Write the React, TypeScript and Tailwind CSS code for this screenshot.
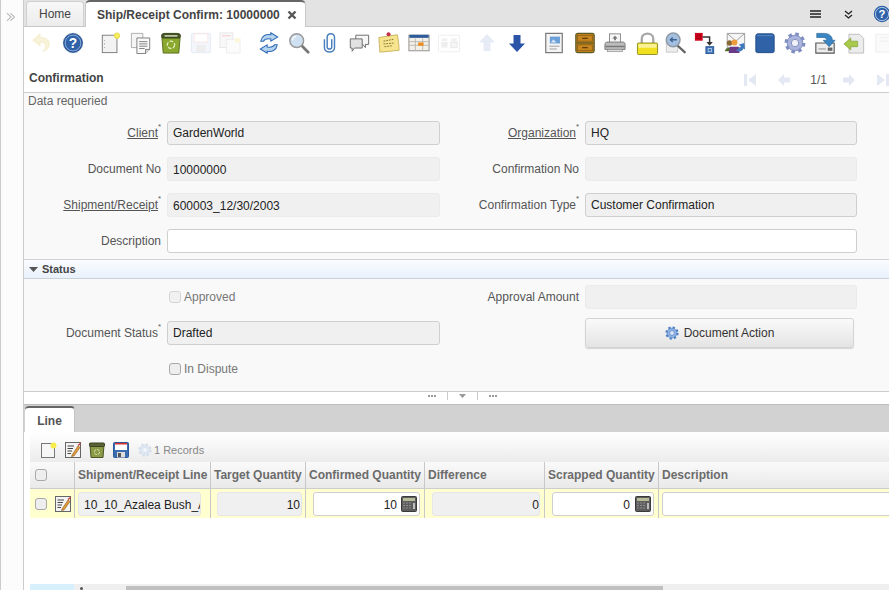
import React from "react";

const S = ({ children, size = 22, box = 24 }: { children: React.ReactNode; size?: number; box?: number }) => (
  <svg width={size} height={size} viewBox={`0 0 ${box} ${box}`} className="block shrink-0">{children}</svg>
);

const Gear = ({ fill, ring, hole }: { fill: string; ring: string; hole: string }) => (
  <>
    <circle cx="12" cy="12" r="8.6" fill={fill} stroke={ring} strokeWidth="1" />
    <circle cx="12" cy="12" r="9.6" fill="none" stroke={ring} strokeWidth="3.6" strokeDasharray="3.8 3.74" />
    <circle cx="12" cy="12" r="4" fill={hole} stroke={ring} strokeWidth="1" />
  </>
);

const Undo = () => <S><path d="M11 2 L3 9 L11 15 V11 C15 11 17 13 17 16 C17 18 16 20 14 21 C19 20 21 17 21 13 C21 8 16 6 11 6 Z" fill="#f8f2d8" stroke="#f3ecca" /></S>;
const Help = () => <S><circle cx="12" cy="12" r="11.4" fill="#dfe6f0" /><circle cx="12" cy="12" r="10.2" fill="#2f62a8" stroke="#1c4687" /><circle cx="12" cy="12" r="8.6" fill="none" stroke="#a9c3e6" strokeWidth="0.8" /><text x="12" y="17.5" textAnchor="middle" fontSize="15" fontWeight="700" fill="#fff" fontFamily="Liberation Sans">?</text></S>;
const NewDoc = () => <S><rect x="2.5" y="3.5" width="16" height="19" fill="#f3f3f3" stroke="#777" /><circle cx="5" cy="9" r=".6" fill="#999" /><circle cx="5" cy="13" r=".6" fill="#999" /><circle cx="5" cy="17" r=".6" fill="#999" /><circle cx="18.5" cy="4" r="3" fill="#f6ec5c" stroke="#e6d74a" /></S>;
const Copy = () => <S><path d="M1.5 1.5 H14 V17 H1.5 Z" fill="#f5f5f5" stroke="#aaa" /><path d="M7.5 6.5 H21.5 V19 L17 23.5 H7.5 Z" fill="#fafafa" stroke="#777" /><path d="M10 10.5 H19 M10 13 H19 M10 15.5 H19 M10 18 H16" stroke="#777" /><path d="M17 23.5 V19 H21.5" fill="#ddd" stroke="#777" /></S>;
const Bin = () => <S><path d="M2 5 C2 1.5 4 1.5 6 1.5 H18 C20 1.5 22 1.5 22 5 L20.5 23 H3.5 Z" fill="#8aa72e" stroke="#56691a" /><rect x="2" y="2" width="20" height="4.5" rx="1.5" fill="#4b5a2c" stroke="#2f3a18" /><rect x="5" y="3.5" width="14" height="1.5" fill="#dfe5c7" /><circle cx="12" cy="14" r="4" fill="none" stroke="#e4edbd" strokeWidth="1.4" strokeDasharray="4 1.6" /></S>;
const SaveOff = () => <S><rect x="1.5" y="1.5" width="21" height="21" rx="1.5" fill="#f3f6fb" stroke="#e2e9f4" /><rect x="4.5" y="2" width="15" height="9" fill="#fff" stroke="#f9e3e3" /><rect x="7" y="14" width="10" height="8" fill="#eeeeee" /></S>;
const SaveCopyOff = () => <S><rect x="1" y="1" width="14" height="16" fill="#f8f8f8" stroke="#e6e6e6" /><path d="M3 4 H13" stroke="#f9d8d8" strokeWidth="1.5" /><rect x="8" y="8" width="15" height="15" fill="#fbfbfb" stroke="#ececec" /><circle cx="20" cy="9" r="2.6" fill="#fcf8d6" /></S>;
const Refresh = () => <S><path d="M3 10 C4 4 9 2 14 3 V0.8 L21.5 5.5 L14 10 V7.6 C10 7 7 8 6 10 Z" fill="#b6d3ef" stroke="#2e6ab3" strokeWidth="1.1" /><path d="M21 14 C20 20 15 22 10 21 V23.2 L2.5 18.5 L10 14 V16.4 C14 17 17 16 18 14 Z" fill="#b6d3ef" stroke="#2e6ab3" strokeWidth="1.1" /></S>;
const Find = () => <S><path d="M14.5 14.5 L22 22" stroke="#777" strokeWidth="3" strokeLinecap="round" /><circle cx="9.5" cy="9.5" r="7.5" fill="#cfe0f2" stroke="#9a9a9a" strokeWidth="1.6" /><path d="M5 9 C5 6.5 7 5 9 5" stroke="#fff" fill="none" strokeWidth="1.4" /></S>;
const Clip = () => <S><path d="M7 8 V17 C7 23.5 18 23.5 18 17 V6 C18 0.5 10 0.5 10 6 V16 C10 19.5 15 19.5 15 16 V8" fill="none" stroke="#4a7fbd" strokeWidth="1.6" /></S>;
const Chat = () => <S><path d="M8.5 3.5 H22.5 V13.5 H19 V17 L16 13.5 H8.5 Z" fill="#f7f7f7" stroke="#666" /><path d="M2.5 7.5 H15.5 V17.5 H7 L4.5 21 V17.5 H2.5 Z" fill="#e2e2e2" stroke="#666" /></S>;
const Note = () => <S><path d="M1 6 L21 3 C22 8 23 14 23 20 L2 22 C2 16 1 11 1 6 Z" fill="#f6e58e" stroke="#c7b15a" /><path d="M6 10 L17 8 M6 13 L18 12 M7 16 L16 15" stroke="#8d7d38" strokeWidth="1.1" strokeDasharray="2 1" /><circle cx="11.5" cy="2.5" r="2.2" fill="#c3304c" /></S>;
const Calendar = () => <S><rect x="1" y="3.5" width="22" height="17" fill="#f2f0e8" stroke="#8a8a8a" /><rect x="1.5" y="3" width="21" height="3.4" fill="#2e5c9a" /><path d="M1 10.5 H23 M1 14.5 H23 M8 7 V20 M16 7 V20" stroke="#b8b8b0" /><rect x="11" y="11.5" width="6" height="3.5" fill="#ef8d1c" /></S>;
const GridOff = () => <S><rect x=".5" y="3.5" width="23" height="18" rx="1" fill="#fff" stroke="#ececec" /><rect x="4" y="7" width="6" height="3" fill="#f0f0f0" /><rect x="3.5" y="11" width="7" height="6" fill="#eee" /><rect x="14.5" y="7" width="6" height="3" fill="#f0f0f0" /><rect x="14" y="11" width="7" height="6" fill="#f5f5f5" stroke="#e8e8e8" /></S>;
const Up = () => <S size={24}><path d="M12 3 L20 11.5 H15.5 V20 H8.5 V11.5 H4 Z" fill="#e6ebf6" /></S>;
const Down = () => <S size={24}><path d="M12 21 L20 12.5 H15.5 V4 H8.5 V12.5 H4 Z" fill="#2b54a8" /></S>;
const Report = () => <S><rect x="3" y="1.5" width="18" height="21" fill="#f4f4f4" stroke="#777" strokeWidth="1.3" /><rect x="7.5" y="5" width="11" height="7.5" fill="#6a9fd8" /><path d="M8.5 11.5 L11.5 8 L14.5 11.5" fill="#d6e5f5" /><path d="M7 15.5 H18 M7 18.5 H15" stroke="#9a9a9a" /></S>;
const Archive = () => <S><rect x="2" y="1.5" width="20" height="21" rx="2" fill="#c6851e" stroke="#5e5a28" strokeWidth="1.4" /><path d="M2.5 12 H21.5" stroke="#5e5a28" strokeWidth="1.4" /><path d="M9 7 H15 M9 17 H15" stroke="#5e3d0d" strokeWidth="1.4" /><rect x="4" y="3.5" width="16" height="6.5" fill="none" stroke="#7a5714" strokeWidth=".7" /><rect x="4" y="14" width="16" height="6.5" fill="none" stroke="#7a5714" strokeWidth=".7" /></S>;
const Print = () => <S><rect x="6" y="2" width="12" height="10" fill="#f6f6f6" stroke="#888" /><path d="M12 4 L15 7 H13 V9 H11 V7 H9 Z" fill="#777" /><path d="M3 11 H21 C22 11 23 12 23 14 V19 H1 V14 C1 12 2 11 3 11 Z" fill="#bcbcbc" stroke="#777" /><rect x="1.5" y="15" width="21" height="1.6" fill="#777" /><rect x="4" y="19" width="16" height="2.5" fill="#ddd" stroke="#888" strokeWidth=".7" /></S>;
const Lock = () => <S size={23}><path d="M6 12 V7 C6 0 18 0 18 7 V12" fill="none" stroke="#a8a8a8" strokeWidth="2.4" /><rect x="1.5" y="11.5" width="21" height="12" rx="1" fill="#f0e020" stroke="#8f8d20" /><rect x="2.5" y="12.5" width="19" height="4" fill="#f9f192" /></S>;
const ZoomAcross = () => <S><path d="M2.5 8 H15 V22 H2.5 Z" fill="#ededed" stroke="#c6c6c6" /><path d="M15 15 L22.5 22" stroke="#666" strokeWidth="2.6" strokeLinecap="round" /><circle cx="10" cy="8.5" r="7.5" fill="#a4bfdf" stroke="#8f9aa8" strokeWidth="1.6" /><path d="M14 8.5 H7 M9.5 6 L7 8.5 L9.5 11" fill="none" stroke="#3a628f" strokeWidth="1.5" /></S>;
const Workflow = () => <S><rect x="1" y="1" width="8.5" height="8.5" fill="#d0021b" /><rect x="3.5" y="3.5" width="3.5" height="3.5" fill="none" stroke="#9c0014" /><path d="M9.5 5.5 H17 V12" fill="none" stroke="#333" strokeWidth="1.6" /><path d="M13.5 11 H20.5 L17 15 Z" fill="#333" /><rect x="13" y="16" width="8.5" height="7.5" fill="#3f73b5" stroke="#2c5a96" /><rect x="15.5" y="18" width="3.5" height="3.5" fill="none" stroke="#a9c8ea" /></S>;
const Mail = () => <S><path d="M3.5 1.5 H22.5 V17 H3.5 Z" fill="#f5f5f5" stroke="#999" /><path d="M3.5 1.5 L13 10 L22.5 1.5" fill="none" stroke="#999" /><circle cx="6" cy="12" r="3" fill="#8a6a34" /><path d="M1 21 C1 16 11 16 11 21 Z" fill="#516b2a" /><circle cx="11.5" cy="11.5" r="3.2" fill="#ef9c3d" /><path d="M5 23 L6.5 16 H16 L17 23 Z" fill="#6b3a86" /><path d="M13 20 C15 22 20 22 21 18 L23 19 L22 12 L16 14 L18.5 15.5 C17.5 18 15 18 13 20 Z" fill="#3f78bd" /></S>;
const Block = () => <S><path d="M4 2 H20 C21 2 22 3 22 4 V21 C22 22 21 22.5 20 22.5 H4 C3 22.5 2 22 2 21 V4 C2 3 3 2 4 2 Z" fill="#2f62a6" stroke="#1f4a85" /><path d="M3.5 4 H20.5" stroke="#5f8dc8" /></S>;
const Settings = () => <S><Gear fill="#a9b3dc" ring="#7f8ec0" hole="#f2f2f6" /></S>;
const Imp = () => <S><path d="M2 12 H22 V23 H2 Z" fill="#ededed" stroke="#555" strokeWidth="1.2" /><rect x="15" y="17" width="5" height="3.5" fill="#666" /><path d="M5 18.5 H13" stroke="#888" /><path d="M3 1.5 H11 C18 1.5 20 6 20 9 H23 L16.5 16 L10 9 H14 C14 7 12.5 6 10 6 H3 Z" fill="#3a85c4" stroke="#21608f" strokeWidth=".7" /></S>;
const Exp = () => <S><path d="M6.5 2.5 H18 L22.5 7 V23 H6.5 Z" fill="#ececec" stroke="#bbb" /><path d="M1 13 L8.5 6.5 V10 H16 V16 H8.5 V19.5 Z" fill="#a8c94a" stroke="#7f9d30" strokeWidth=".7" /></S>;
const LastOff = () => <S><path d="M4 2.5 H22 V22 H4 Z" fill="#fafafa" stroke="#eee" /><path d="M8 6 H18 M8 10 H18" stroke="#f0f0f0" /></S>;

const Calc = () => (
  <S size={16} box={16}>
    <rect x=".5" y=".5" width="15" height="15" rx="1" fill="#5d5d5d" stroke="#3a3a3a" />
    <rect x="2" y="2" width="12" height="3" fill="#b8bb98" />
    <path d="M2 7 H11 M2 9.5 H11 M2 12 H11" stroke="#8e8e8e" strokeWidth="1.2" strokeDasharray="2 1" />
    <rect x="12" y="7" width="2" height="6" fill="#bdbdbd" />
  </S>
);

const EditIcon = () => (
  <S size={16} box={16}>
    <rect x=".5" y=".5" width="15" height="15" fill="#f4f4f4" stroke="#666" />
    <path d="M2.5 4 H9 M2.5 6.5 H8 M2.5 9 H7 M2.5 11.5 H6" stroke="#444" />
    <path d="M7 13 L13 4 L15 5.5 L9 14 L6.5 14.5 Z" fill="#e09a3a" stroke="#8a5a20" strokeWidth=".6" />
    <path d="M13 3.5 L15.5 1.5" stroke="#c33" strokeWidth="1.4" />
  </S>
);

const bar: { c: React.ReactNode; m: string }[] = [
  { c: <Undo />, m: "ml-[5px]" }, { c: <Help />, m: "ml-[8px]" }, { c: <NewDoc />, m: "ml-[14px]" },
  { c: <Copy />, m: "ml-[6px]" }, { c: <Bin />, m: "ml-[6px]" }, { c: <SaveOff />, m: "ml-[6px]" },
  { c: <SaveCopyOff />, m: "ml-[5px]" }, { c: <Refresh />, m: "ml-[15px]" }, { c: <Find />, m: "ml-[6px]" },
  { c: <Clip />, m: "ml-[6px]" }, { c: <Chat />, m: "ml-[6px]" }, { c: <Note />, m: "ml-[6px]" },
  { c: <Calendar />, m: "ml-[6px]" }, { c: <GridOff />, m: "ml-[6px]" }, { c: <Up />, m: "ml-[14px]" },
  { c: <Down />, m: "ml-[6px]" }, { c: <Report />, m: "ml-[13px]" }, { c: <Archive />, m: "ml-[7px]" },
  { c: <Print />, m: "ml-[6px]" }, { c: <Lock />, m: "ml-[8px]" }, { c: <ZoomAcross />, m: "ml-[4px]" },
  { c: <Workflow />, m: "ml-[6px]" }, { c: <Mail />, m: "ml-[6px]" }, { c: <Block />, m: "ml-[6px]" },
  { c: <Settings />, m: "ml-[6px]" }, { c: <Imp />, m: "ml-[6px]" }, { c: <Exp />, m: "ml-[5px]" },
  { c: <LastOff />, m: "ml-[5px]" },
];

const Star = () => <span className="relative -top-[8px] inline-block w-[3px] text-left text-[8px] leading-none text-[#555]">*</span>;

const Label = ({ text, link, star, className = "" }: { text: string; link?: boolean; star?: boolean; className?: string }) => (
  <div className={`text-right text-[12px] text-[#555] ${className}`}>
    <span className={link ? "underline" : ""}>{text}</span>
    {star && <Star />}
  </div>
);

const Field = ({ value = "", ro = true, border = false, className = "" }: { value?: string; ro?: boolean; border?: boolean; className?: string }) => (
  <div
    className={`flex h-6 items-center rounded-[3px] border px-[5px] text-[12px] text-[#222] ${
      ro ? "bg-[#f0f0f0]" : "bg-white"
    } ${border ? "border-[#cfcfcf]" : ro ? "border-[#ebebeb] pt-[2px]" : "border-[#cfcfcf]"} ${className}`}
  >
    {value}
  </div>
);

const Check = ({ label, faded }: { label: string; faded?: boolean }) => (
  <div className="flex items-center text-[12px] text-[#777]">
    <span className={`ml-[2px] mr-[3px] h-3 w-3 rounded-[3px] border ${faded ? "border-[#d5d5d5] bg-[#f1f1f1]" : "border-[#a8a8a8] bg-[#eeeeee]"}`} />
    {label}
  </div>
);

const Head = ({ t, className = "" }: { t: string; className?: string }) => (
  <div className={`flex items-center overflow-hidden whitespace-nowrap border-l border-[#c8c8c8] pl-[3px] text-[12px] font-bold text-[#6b6b6b] ${className}`}>{t}</div>
);

export default function App() {
  return (
    <div className="flex h-[590px] w-[889px] overflow-hidden bg-white font-['Liberation_Sans',Arial,sans-serif]">
      <div className="flex h-full w-6 shrink-0 justify-center border-x border-x-[#cccccc] bg-[#fcfcfc] pt-[12px]">
        <svg width="9" height="10" viewBox="0 0 9 12" preserveAspectRatio="none" className="mr-[3px]"><path d="M1 1.5 L5 6 L1 10.5 M4.5 1.5 L8.5 6 L4.5 10.5" fill="none" stroke="#b5b5b5" strokeWidth="1.3" /></svg>
      </div>

      <div className="flex h-full min-w-0 flex-1 flex-col">
        {/* Window tabs */}
        <div className="flex h-[27px] shrink-0 items-end border-b border-[#c9c9c9] bg-[#e3e3e3]">
          <div className="ml-[2px] flex h-[25px] w-[58px] items-center justify-center rounded-t-[4px] border border-b-0 border-[#d0d0d0] bg-gradient-to-b from-[#f8f8f8] to-[#ececec] text-[12px] text-[#444]">Home</div>
          <div className="relative top-[1px] ml-[1px] flex h-[27px] w-[221px] items-center rounded-t-[5px] border-x border-x-[#c9c9c9] border-t-2 border-t-[#666] bg-white pl-[11px] text-[12px] font-bold text-[#444]">
            <span className="whitespace-nowrap">Ship/Receipt Confirm: 10000000</span>
            <svg width="10" height="10" viewBox="0 0 10 10" className="ml-[7px]"><path d="M1.5 1.5 L8.5 8.5 M8.5 1.5 L1.5 8.5" stroke="#555" strokeWidth="2.4" /></svg>
          </div>
          <div className="flex h-[26px] flex-1 items-center justify-end pt-[2px]">
            <svg width="11" height="8" viewBox="0 0 11 9" preserveAspectRatio="none" className="mr-[23px]"><path d="M0 1 H11 M0 4.5 H11 M0 8 H11" stroke="#222" strokeWidth="1.7" /></svg>
            <svg width="9" height="9" viewBox="0 0 9 9" className="mr-[20px]"><path d="M1 1 L4.5 4 L8 1 M1 5 L4.5 8 L8 5" fill="none" stroke="#222" strokeWidth="1.3" /></svg>
            <svg width="18" height="18" viewBox="0 0 24 24" className="mr-[-2px] shrink-0"><circle cx="12" cy="12" r="11" fill="#2f62a8" /><circle cx="12" cy="12" r="8.8" fill="none" stroke="#d8e4f4" strokeWidth="1" /><text x="12" y="17.5" textAnchor="middle" fontSize="15" fontWeight="700" fill="#fff" fontFamily="Liberation Sans">?</text></svg>
          </div>
        </div>

        {/* Main toolbar */}
        <div className="flex h-[38px] shrink-0 items-center overflow-hidden bg-white pb-[8px] pt-[2px]">
          {bar.map((b, i) => (
            <div key={i} className={`flex w-6 shrink-0 justify-center ${b.m}`}>{b.c}</div>
          ))}
        </div>

        {/* Title + pager */}
        <div className="flex h-[28px] shrink-0 items-center border-b border-[#cccccc] bg-white pl-[5px]">
          <span className="mb-[2px] text-[12px] font-bold text-[#444]">Confirmation</span>
          <div className="ml-auto flex items-center pt-[2px]">
            <svg width="12" height="12" viewBox="0 0 12 12"><path d="M0 0 H3 V12 H0 Z M12 0 V12 L4 6 Z" fill="#e3e8f3" /></svg>
            <svg width="12" height="12" viewBox="0 0 14 12" preserveAspectRatio="none" className="ml-[22px]"><path d="M0 6 L7 0 V3.5 H14 V8.5 H7 V12 Z" fill="#e3e8f3" /></svg>
            <span className="ml-[20px] text-[12px] text-[#555]">1/1</span>
            <svg width="12" height="12" viewBox="0 0 14 12" preserveAspectRatio="none" className="ml-[16px]"><path d="M14 6 L7 0 V3.5 H0 V8.5 H7 V12 Z" fill="#e3e8f3" /></svg>
            <svg width="12" height="12" viewBox="0 0 12 12" className="ml-[22px]"><path d="M0 0 L8 6 L0 12 Z M9 0 H12 V12 H9 Z" fill="#e3e8f3" /></svg>
          </div>
        </div>

        {/* Form */}
        <div className="shrink-0 border-b border-[#cccccc] bg-[#f9f9f9]">
          <div className="h-[17px] pl-[4px] pt-[1px] text-[12px] leading-[14px] text-[#666]">Data requeried</div>
          <div className="grid grid-cols-[137px_273px_133px_272px] items-center gap-x-[6px] gap-y-3 pb-[6px] pt-[11px]">
            <Label text="Client" link star />
            <Field value="GardenWorld" border />
            <Label text="Organization" link star />
            <Field value="HQ" border />
            <Label text="Document No" />
            <Field value="10000000" />
            <Label text="Confirmation No" />
            <Field />
            <Label text="Shipment/Receipt" link star />
            <Field value="600003_12/30/2003" />
            <Label text="Confirmation Type" star />
            <Field value="Customer Confirmation" border />
            <Label text="Description" />
            <Field ro={false} className="col-span-3" />
          </div>
          <div className="flex h-[20px] items-center border-y border-t-[#d0d0d0] border-b-[#c9d2dc] bg-gradient-to-b from-[#fafcff] to-[#e9f1fb] pl-[5px] pt-[1px] text-[11px] font-bold text-[#444]">
            <svg width="9" height="5" viewBox="0 0 9 5" className="mr-[4px]"><path d="M0 0 H9 L4.5 5 Z" fill="#555" /></svg>
            Status
          </div>
          <div className="grid grid-cols-[137px_273px_133px_272px] items-center gap-x-[6px] gap-y-3 pb-[10px] pt-[6px]">
            <div />
            <Check label="Approved" faded />
            <Label text="Approval Amount" />
            <Field />
            <Label text="Document Status" star />
            <Field value="Drafted" border />
            <div />
            <button className="-my-[3px] flex h-[30px] w-[269px] items-center justify-center rounded-[3px] border border-[#d4d4d4] bg-gradient-to-b from-[#fafafa] to-[#e4e4e4] text-[12px] text-[#333] shadow-[0_1px_1px_rgba(0,0,0,0.15)]">
              <span className="mr-[5px]"><S size={14}><Gear fill="#8fb2e2" ring="#4f80c4" hole="#dbe7f6" /></S></span>
              Document Action
            </button>
            <div />
            <Check label="In Dispute" />
            <div />
            <div className="h-6" />
          </div>
        </div>

        {/* Splitter */}
        <div className="flex h-[12px] shrink-0 justify-center bg-white pl-[12px]">
          <div className="flex h-[8px] items-center">
            <span className="w-[8px] border-t-2 border-dotted border-[#999]" />
            <span className="ml-[11px] h-[8px] border-l border-[#ccc]" />
            <svg width="7" height="4" viewBox="0 0 7 4" className="ml-[11px]"><path d="M0 0 H7 L3.5 4 Z" fill="#999" /></svg>
            <span className="ml-[11px] h-[8px] border-l border-[#ccc]" />
            <span className="ml-[11px] w-[8px] border-t-2 border-dotted border-[#999]" />
          </div>
        </div>

        {/* Detail tabs */}
        <div className="flex h-[28px] shrink-0 items-end border-t border-[#bdbdbd] bg-[#d2d2d2] pl-[1px]">
          <div className="flex h-[26px] w-[50px] items-center justify-center rounded-t-[4px] border-r border-r-[#c4c4c4] border-t-2 border-t-[#666] bg-white pt-[1px] text-[12px] font-bold text-[#555]">Line</div>
        </div>

        {/* Grid */}
        <div className="flex min-h-0 flex-1 flex-col overflow-hidden pl-[6px]">
          <div className="flex h-[30px] shrink-0 items-center bg-gradient-to-b from-white to-[#ececec] pl-[11px] pt-[5px]">
            <S size={16} box={16}><rect x=".5" y="1.5" width="13" height="14" fill="#f6f6f6" stroke="#777" /><circle cx="12.5" cy="3.5" r="3" fill="#f7ec4a" /></S>
            <span className="ml-[8px]"><EditIcon /></span>
            <span className="ml-[8px]"><S size={16} box={16}><path d="M1 3 H15 L14 15.5 H2 Z" fill="#8b9a45" stroke="#4b5526" /><rect x=".5" y="1" width="15" height="3.5" rx="1" fill="#596336" stroke="#3a4222" /><circle cx="8" cy="10" r="2.6" fill="none" stroke="#d3dcae" strokeDasharray="3 1" /></S></span>
            <span className="ml-[8px]"><S size={16} box={16}><rect x=".5" y=".5" width="15" height="15" rx="1" fill="#3c6db1" stroke="#2c5899" /><rect x="2" y="1" width="12" height="7" fill="#fff" /><rect x="2" y="1" width="12" height="1.5" fill="#d9342c" /><rect x="4" y="10" width="8" height="5.5" fill="#ddd" /><rect x="5" y="11" width="3" height="4" fill="#555" /></S></span>
            <span className="ml-[9px]"><S size={14}><Gear fill="#dfe7f2" ring="#d3deec" hole="#f4f7fb" /></S></span>
            <span className="ml-[2px] mt-[1px] text-[11px] text-[#888]">1 Records</span>
          </div>
          <div className="grid h-[27px] w-[1000px] shrink-0 grid-cols-[44px_136px_95px_119px_120px_114px_372px] border-b border-[#cccccc] bg-gradient-to-b from-[#fafafa] to-[#e9e9e9]">
            <div className="flex items-center pl-[5px]"><span className="h-3 w-3 rounded-[3px] border border-[#a8a8a8] bg-[#eeeeee]" /></div>
            <Head t="Shipment/Receipt Line" />
            <Head t="Target Quantity" />
            <Head t="Confirmed Quantity" />
            <Head t="Difference" />
            <Head t="Scrapped Quantity" />
            <Head t="Description" />
          </div>
          <div className="grid h-[29px] w-[1000px] shrink-0 grid-cols-[44px_136px_95px_119px_120px_114px_372px] bg-[#ffffcf]">
            <div className="flex items-center pl-[5px]">
              <span className="h-3 w-3 rounded-[3px] border border-[#a8a8a8] bg-[#eeeeee]" />
              <span className="ml-[8px]"><EditIcon /></span>
            </div>
            <div className="flex items-center border-l border-[#c8c8c8] pl-[3px]">
              <div className="flex h-6 w-[123px] items-center overflow-hidden whitespace-nowrap rounded-[3px] border border-[#e6e6e6] bg-[#f0f0f0] pl-[5px] pt-[2px] text-[12px] text-[#222]">10_10_Azalea Bush_A</div>
            </div>
            <div className="flex items-center border-l border-[#c8c8c8] pl-[6px]">
              <div className="flex h-6 w-[85px] items-center justify-end rounded-[3px] border border-[#e6e6e6] bg-[#f0f0f0] pr-[1px] pt-[2px] text-[12px] text-[#222]">10</div>
            </div>
            <div className="flex items-center border-l border-[#c8c8c8] pl-[7px]">
              <div className="flex h-6 w-[107px] items-center justify-end rounded-[3px] border border-[#cfcfcf] bg-white pr-[2px] text-[12px] text-[#222]"><span className="mr-[4px] mt-[2px]">10</span><Calc /></div>
            </div>
            <div className="flex items-center border-l border-[#c8c8c8] pl-[7px]">
              <div className="flex h-6 w-[108px] items-center justify-end rounded-[3px] border border-[#e6e6e6] bg-[#f0f0f0] pt-[2px] text-[12px] text-[#222]">0</div>
            </div>
            <div className="flex items-center border-l border-[#c8c8c8] pl-[7px]">
              <div className="flex h-6 w-[102px] items-center justify-end rounded-[3px] border border-[#cfcfcf] bg-white pr-[2px] text-[12px] text-[#222]"><span className="mr-[5px] mt-[2px]">0</span><Calc /></div>
            </div>
            <div className="flex items-center border-l border-[#c8c8c8] pl-[3px]">
              <div className="h-6 w-[300px] rounded-[3px] border border-[#cfcfcf] bg-white" />
            </div>
          </div>
          <div className="flex-1" />
          <div className="flex h-[6px] shrink-0 items-end bg-[#efefef]">
            <div className="h-[6px] w-[44px] bg-[#d8f0fb]" />
            <div className="flex h-[6px] w-[52px] items-end overflow-hidden pl-[6px]"><span className="h-[3px] w-[3px] rounded-full bg-[#555]" /></div>
            <div className="h-[4px] w-[537px] bg-[#c0c0c0]" />
          </div>
        </div>
      </div>
    </div>
  );
}
